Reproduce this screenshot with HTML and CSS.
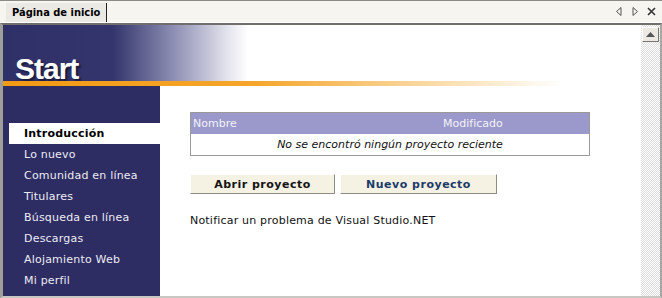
FILE: index.html
```html
<!DOCTYPE html>
<html lang="es">
<head>
  <meta charset="UTF-8" />
  <title>Página de inicio</title>
  <link rel="stylesheet" href="styles.css">
</head>
<body>
  <div class="window">
    <div class="tabbar">
      <div class="tab">Página de inicio</div>
      <div class="controls">
        <svg width="8" height="9" viewBox="0 0 8 9"><path d="M6 0.5 L1.5 4.5 L6 8.5 Z" fill="none" stroke="#555" stroke-width="1"/></svg>
        <svg width="8" height="9" viewBox="0 0 8 9"><path d="M2 0.5 L6.5 4.5 L2 8.5 Z" fill="none" stroke="#555" stroke-width="1"/></svg>
        <svg width="9" height="9" viewBox="0 0 9 9"><path d="M1 1 L8 8 M8 1 L1 8" stroke="#333" stroke-width="1.6"/></svg>
      </div>
    </div>
    <div class="frame">
      <div class="page">
        <div class="banner">
          <span class="logo">Start</span>
        </div>
        <div class="rule"></div>
        <div class="content">
          <ul class="nav">
            <li class="active">Introducción</li>
            <li>Lo nuevo</li>
            <li>Comunidad en línea</li>
            <li>Titulares</li>
            <li>Búsqueda en línea</li>
            <li>Descargas</li>
            <li>Alojamiento Web</li>
            <li>Mi perfil</li>
          </ul>
          <div class="main">
            <table class="projects">
              <thead>
                <tr><th class="col-name">Nombre</th><th class="col-date">Modificado</th></tr>
              </thead>
              <tbody>
                <tr><td colspan="2" class="empty">No se encontró ningún proyecto reciente</td></tr>
              </tbody>
            </table>
            <div class="buttons">
              <button class="btn btn-open">Abrir proyecto</button>
              <button class="btn btn-new">Nuevo proyecto</button>
            </div>
            <p class="report">Notificar un problema de Visual Studio.NET</p>
          </div>
        </div>
      </div>
      <div class="scrollbar">
        <div class="scroll-up">
          <svg width="9" height="5" viewBox="0 0 9 5"><path d="M0 5 L4.5 0 L9 5 Z" fill="#555"/></svg>
        </div>
      </div>
    </div>
  </div>
</body>
</html>
```

FILE: styles.css
```css
body { margin: 0; font-family: "DejaVu Sans", Verdana, sans-serif; font-size: 11px; background: #fff; }
.window { width: 662px; height: 298px; display: flex; flex-direction: column; overflow: hidden; }

.tabbar { height: 23px; border-top: 1px solid #8c8a84; background: #f7f5f0; display: flex; justify-content: space-between; align-items: flex-end; box-sizing: border-box; border-bottom: 1px solid #fff; }
.tab { margin-left: 6px; height: 19px; padding: 0 6px; background: #ebe9e3; border-right: 1px solid #222; font-family: "DejaVu Sans Condensed", "DejaVu Sans", sans-serif; font-weight: bold; font-size: 11px; line-height: 19px; color: #000; }
.controls { display: flex; gap: 8px; align-items: center; padding: 0 6px 6px 0; }

.frame { flex: 1; display: flex; border-top: 2px solid #6f6e6a; border-left: 3px solid #9f9e99; border-right: 2px solid #a8a7a2; border-bottom: 2px solid #c8c7c2; min-height: 0; }
.page { flex: 1; display: flex; flex-direction: column; background: #fff; }

.banner { height: 56px; background: linear-gradient(to right, #2f3068 0px, #33356c 110px, #9495b8 175px, #e4e4ee 225px, #fff 245px); display: flex; align-items: flex-end; padding-left: 12px; }
.logo { color: #fff; font-family: "Liberation Sans", Arial, sans-serif; font-weight: bold; font-size: 30px; letter-spacing: -1px; line-height: 30px; margin-bottom: -3px; text-shadow: 2px 2px 2px #1a1a3a; }
.rule { height: 5px; background: linear-gradient(to right, #f39a14 0px, #f5a52a 250px, #fad8a0 420px, #fff 560px); }

.content { flex: 1; display: flex; }
.nav { width: 157px; margin: 0; padding: 37px 0 0 0; list-style: none; background: #2e2d63; }
.nav li { margin-left: 6px; height: 21px; line-height: 21px; padding-left: 15px; color: #ecebf4; letter-spacing: 0.2px; }
.nav li.active { background: #fff; color: #000; font-weight: bold; }

.main { flex: 1; padding: 26px 0 0 30px; }
.projects { width: 400px; border-collapse: collapse; border: 1px solid #999; }
.projects th { background: #9b99cc; color: #f2f2f8; font-weight: normal; text-align: left; height: 21px; padding: 0 0 0 2px; }
.projects th.col-date { padding-left: 0; width: 146px; }
.projects td.empty { height: 21px; text-align: center; font-style: italic; color: #111; padding: 0; }

.buttons { display: flex; gap: 5px; margin-top: 18px; }
.btn { height: 20px; padding: 0; background: #f5f1e3; border: 1px solid #fff; border-right-color: #8c8a86; border-bottom-color: #8c8a86; font-family: "DejaVu Sans", Verdana, sans-serif; font-size: 11px; font-weight: bold; letter-spacing: 0.5px; }
.btn-open { width: 145px; color: #141414; }
.btn-new { width: 157px; color: #1c3b6b; }

.report { margin: 20px 0 0 0; color: #111; letter-spacing: 0.2px; }

.scrollbar { width: 19px; background-color: #fff; background-image: linear-gradient(45deg, #ddd 25%, transparent 25%, transparent 75%, #ddd 75%), linear-gradient(45deg, #ddd 25%, transparent 25%, transparent 75%, #ddd 75%); background-size: 2px 2px; background-position: 0 0, 1px 1px; }
.scroll-up { margin: 2px 1px 0 1px; height: 15px; background: #ece9e2; border: 1px solid #fff; border-right-color: #777; border-bottom-color: #777; box-sizing: border-box; display: flex; align-items: center; justify-content: center; }
```
